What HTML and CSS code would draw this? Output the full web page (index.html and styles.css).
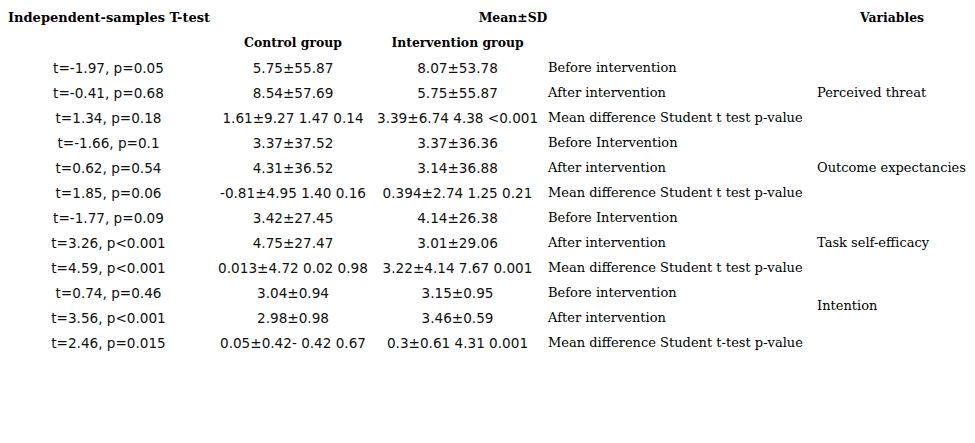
FILE: index.html
```html
<!DOCTYPE html>
<html>
<head>
<meta charset="utf-8">
<link rel="stylesheet" href="styles.css">
</head>
<body>
<table class="stats">
  <colgroup>
    <col class="c-test"><col class="c-ctrl"><col class="c-int"><col class="c-desc"><col class="c-var">
  </colgroup>
  <thead>
    <tr>
      <th class="h-left">Independent-samples T-test</th>
      <th colspan="3">Mean±SD</th>
      <th>Variables</th>
    </tr>
    <tr>
      <th></th>
      <th>Control group</th>
      <th>Intervention group</th>
      <th></th>
      <th></th>
    </tr>
  </thead>
  <tbody>
    <tr><td class="num">t=-1.97, p=0.05</td><td class="num">5.75±55.87</td><td class="num">8.07±53.78</td><td class="desc">Before intervention</td><td class="var" rowspan="3">Perceived threat</td></tr>
    <tr><td class="num">t=-0.41, p=0.68</td><td class="num">8.54±57.69</td><td class="num">5.75±55.87</td><td class="desc">After intervention</td></tr>
    <tr><td class="num">t=1.34, p=0.18</td><td class="num">1.61±9.27 1.47 0.14</td><td class="num">3.39±6.74 4.38 &lt;0.001</td><td class="desc">Mean difference Student t test p-value</td></tr>
    <tr><td class="num">t=-1.66, p=0.1</td><td class="num">3.37±37.52</td><td class="num">3.37±36.36</td><td class="desc">Before Intervention</td><td class="var" rowspan="3">Outcome expectancies</td></tr>
    <tr><td class="num">t=0.62, p=0.54</td><td class="num">4.31±36.52</td><td class="num">3.14±36.88</td><td class="desc">After intervention</td></tr>
    <tr><td class="num">t=1.85, p=0.06</td><td class="num">-0.81±4.95 1.40 0.16</td><td class="num">0.394±2.74 1.25 0.21</td><td class="desc">Mean difference Student t test p-value</td></tr>
    <tr><td class="num">t=-1.77, p=0.09</td><td class="num">3.42±27.45</td><td class="num">4.14±26.38</td><td class="desc">Before Intervention</td><td class="var" rowspan="3">Task self-efficacy</td></tr>
    <tr><td class="num">t=3.26, p&lt;0.001</td><td class="num">4.75±27.47</td><td class="num">3.01±29.06</td><td class="desc">After intervention</td></tr>
    <tr><td class="num">t=4.59, p&lt;0.001</td><td class="num">0.013±4.72 0.02 0.98</td><td class="num">3.22±4.14 7.67 0.001</td><td class="desc">Mean difference Student t test p-value</td></tr>
    <tr><td class="num">t=0.74, p=0.46</td><td class="num">3.04±0.94</td><td class="num">3.15±0.95</td><td class="desc">Before intervention</td><td class="var" rowspan="2">Intention</td></tr>
    <tr><td class="num">t=3.56, p&lt;0.001</td><td class="num">2.98±0.98</td><td class="num">3.46±0.59</td><td class="desc">After intervention</td></tr>
    <tr><td class="num">t=2.46, p=0.015</td><td class="num">0.05±0.42- 0.42 0.67</td><td class="num">0.3±0.61 4.31 0.001</td><td class="desc">Mean difference Student t-test p-value</td><td class="var"></td></tr>
  </tbody>
</table>
</body>
</html>
```
FILE: styles.css
```css
html, body {
  margin: 0;
  background: #fff;
  color: #000;
}
body {
  padding: 5px 8px 0 8px;
}
.stats {
  border-collapse: collapse;
  table-layout: fixed;
  width: 959px;
}
.c-test { width: 201px; }
.c-ctrl { width: 168px; }
.c-int { width: 161px; }
.c-desc { width: 279px; }
.c-var { width: 150px; }
.stats th, .stats td {
  padding: 0;
  height: 25px;
  white-space: nowrap;
  vertical-align: middle;
}
.stats th {
  font-family: "DejaVu Serif", serif;
  font-weight: bold;
  font-size: 12.4px;
  text-align: center;
}
.stats th.h-left {
  text-align: left;
  font-size: 13px;
}
.num {
  font-family: "DejaVu Sans", sans-serif;
  font-size: 13.6px;
  color: #111;
  text-align: center;
}
.desc {
  font-family: "DejaVu Serif", serif;
  font-size: 13px;
  text-align: left;
  padding-left: 10px !important;
}
.var {
  font-family: "DejaVu Serif", serif;
  font-size: 13px;
  text-align: left;
}
```
